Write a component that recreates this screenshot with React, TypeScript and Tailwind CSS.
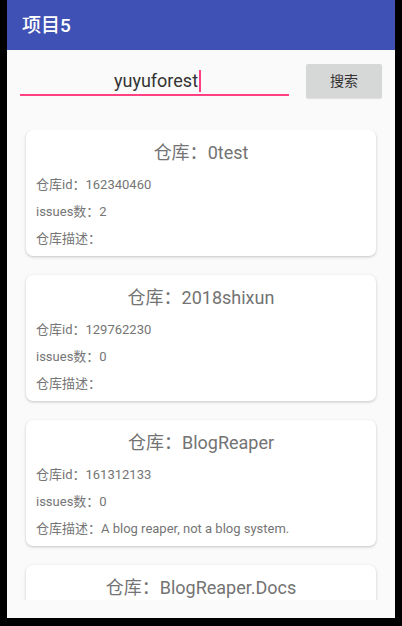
import React from "react";

const repos = [
  { name: "0test", id: "162340460", issues: "2", desc: "" },
  { name: "2018shixun", id: "129762230", issues: "0", desc: "" },
  { name: "BlogReaper", id: "161312133", issues: "0", desc: "A blog reaper, not a blog system." },
  { name: "BlogReaper.Docs", id: "161312134", issues: "0", desc: "" },
];

const font = { fontFamily: "Roboto, 'Noto Sans CJK SC', sans-serif" };

export default function App() {
  return (
    <div className="w-[402px] h-[626px] bg-black pl-[7px] pr-[7px] pb-[8px]" style={font}>
      <div className="w-[388px] h-[618px] bg-[#fafafa] flex flex-col overflow-hidden">
        <div className="h-[50px] bg-[#3f51b5] flex items-center pl-[15px] shrink-0">
          <span className="text-white text-[19px] font-medium leading-none">项目5</span>
        </div>
        <div className="flex mt-[14px] pl-[13px] shrink-0">
          <div className="w-[269px] h-[32px] border-b-2 border-[#ff4081] flex items-end justify-center pb-[3px]">
            <span className="text-[18px] leading-[21px] text-[#333] ml-[6px]">yuyuforest</span>
            <span className="w-[2px] h-[22px] bg-[#ff4081] ml-[1px] mb-[-1px]"></span>
          </div>
          <div className="ml-[17px] w-[76px] h-[34px] bg-[#d6d7d7] rounded-[2px] shadow-[0_1px_1px_rgba(0,0,0,0.12)] flex items-center justify-center text-[14px] text-[#333]">
            搜索
          </div>
        </div>
        <div className="mt-[32px] h-[470px] overflow-hidden flex flex-col gap-[19px] px-[19px] pb-[4px]">
          {repos.map((r) => (
            <div
              key={r.name}
              className="bg-white rounded-[7px] shadow-[0_1px_3px_rgba(0,0,0,0.22)] pt-[11px] pb-[4px] px-[10px] shrink-0"
            >
              <div className="text-center text-[18px] leading-[24px] text-[#737373]">仓库：{r.name}</div>
              <div className="mt-[6px] text-[13px] text-[#757575]">
                <div className="h-[27px] flex items-center">仓库id：{r.id}</div>
                <div className="h-[27px] flex items-center">issues数：{r.issues}</div>
                <div className="h-[27px] flex items-center">仓库描述：{r.desc}</div>
              </div>
            </div>
          ))}
        </div>
      </div>
    </div>
  );
}
